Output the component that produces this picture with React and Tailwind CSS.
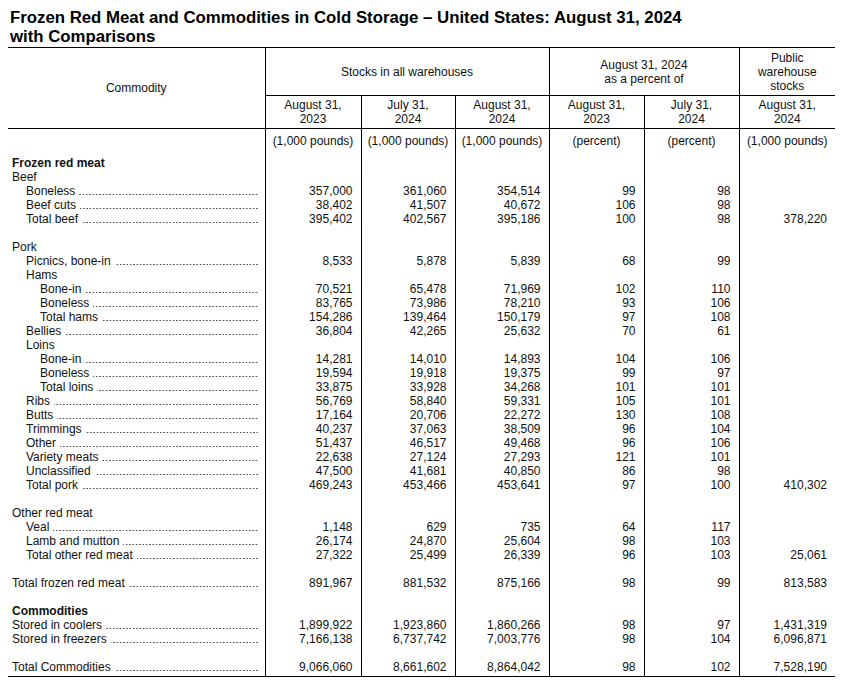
const rows = [
  { label: 'Frozen red meat', lvl: 0, bold: true },
  { label: 'Beef', lvl: 0 },
  { label: 'Boneless', lvl: 1, v: ['357,000', '361,060', '354,514', '99', '98', ''] },
  { label: 'Beef cuts', lvl: 1, v: ['38,402', '41,507', '40,672', '106', '98', ''] },
  { label: 'Total beef', lvl: 1, v: ['395,402', '402,567', '395,186', '100', '98', '378,220'] },
  {},
  { label: 'Pork', lvl: 0 },
  { label: 'Picnics, bone-in', lvl: 1, v: ['8,533', '5,878', '5,839', '68', '99', ''] },
  { label: 'Hams', lvl: 1 },
  { label: 'Bone-in', lvl: 2, v: ['70,521', '65,478', '71,969', '102', '110', ''] },
  { label: 'Boneless', lvl: 2, v: ['83,765', '73,986', '78,210', '93', '106', ''] },
  { label: 'Total hams', lvl: 2, v: ['154,286', '139,464', '150,179', '97', '108', ''] },
  { label: 'Bellies', lvl: 1, v: ['36,804', '42,265', '25,632', '70', '61', ''] },
  { label: 'Loins', lvl: 1 },
  { label: 'Bone-in', lvl: 2, v: ['14,281', '14,010', '14,893', '104', '106', ''] },
  { label: 'Boneless', lvl: 2, v: ['19,594', '19,918', '19,375', '99', '97', ''] },
  { label: 'Total loins', lvl: 2, v: ['33,875', '33,928', '34,268', '101', '101', ''] },
  { label: 'Ribs', lvl: 1, v: ['56,769', '58,840', '59,331', '105', '101', ''] },
  { label: 'Butts', lvl: 1, v: ['17,164', '20,706', '22,272', '130', '108', ''] },
  { label: 'Trimmings', lvl: 1, v: ['40,237', '37,063', '38,509', '96', '104', ''] },
  { label: 'Other', lvl: 1, v: ['51,437', '46,517', '49,468', '96', '106', ''] },
  { label: 'Variety meats', lvl: 1, v: ['22,638', '27,124', '27,293', '121', '101', ''] },
  { label: 'Unclassified', lvl: 1, v: ['47,500', '41,681', '40,850', '86', '98', ''] },
  { label: 'Total pork', lvl: 1, v: ['469,243', '453,466', '453,641', '97', '100', '410,302'] },
  {},
  { label: 'Other red meat', lvl: 0 },
  { label: 'Veal', lvl: 1, v: ['1,148', '629', '735', '64', '117', ''] },
  { label: 'Lamb and mutton', lvl: 1, v: ['26,174', '24,870', '25,604', '98', '103', ''] },
  { label: 'Total other red meat', lvl: 1, v: ['27,322', '25,499', '26,339', '96', '103', '25,061'] },
  {},
  { label: 'Total frozen red meat', lvl: 0, v: ['891,967', '881,532', '875,166', '98', '99', '813,583'] },
  {},
  { label: 'Commodities', lvl: 0, bold: true },
  { label: 'Stored in coolers', lvl: 0, v: ['1,899,922', '1,923,860', '1,860,266', '98', '97', '1,431,319'] },
  { label: 'Stored in freezers', lvl: 0, v: ['7,166,138', '6,737,742', '7,003,776', '98', '104', '6,096,871'] },
  {},
  { label: 'Total Commodities', lvl: 0, v: ['9,066,060', '8,661,602', '8,864,042', '98', '102', '7,528,190'] },
];

const indent = ['pl-[4px]', 'pl-[18px]', 'pl-[32px]'];

// rótulo com pontilhado até a borda da coluna
const Label = ({ r }) => (
  <div className={`flex h-[14px] pr-[6px] ${indent[r.lvl || 0]}`}>
    <span className={`whitespace-nowrap ${r.bold ? 'font-bold' : ''}`}>{r.label}</span>
    {r.v && (
      <span className="ml-[4px] flex-1 bg-[radial-gradient(circle,#555_0.65px,transparent_0.95px)] bg-[length:3.33px_3px] bg-repeat-x bg-[position:right_bottom_2px]" />
    )}
  </div>
);

const th = 'p-0 font-normal text-center align-middle border-black';

export default function App() {
  return (
    <div className="bg-white text-[#111] font-['Liberation_Sans',Arial,sans-serif] w-[849px] h-[686px]">
      <h1 className="pl-[10px] pt-[8px] text-[16.8px] leading-[19px] font-bold text-black">
        Frozen Red Meat and Commodities in Cold Storage – United States: August 31, 2024
        <br />
        with Comparisons
      </h1>
      <table className="ml-[8px] mt-[1px] w-[827px] table-fixed border-collapse border-t border-b border-black text-[12px] leading-[14px]">
        <colgroup>
          <col className="w-[257px]" />
          <col className="w-[96px]" />
          <col className="w-[94px]" />
          <col className="w-[94px]" />
          <col className="w-[95px]" />
          <col className="w-[95px]" />
          <col className="w-[96px]" />
        </colgroup>
        <thead>
          <tr className="h-[48px]">
            <th rowSpan={2} className={`${th} border-r border-b`}>Commodity</th>
            <th colSpan={3} className={`${th} border-r border-b`}>Stocks in all warehouses</th>
            <th colSpan={2} className={`${th} border-r border-b`}>
              August 31, 2024
              <br />
              as a percent of
            </th>
            <th className={`${th} border-b`}>
              Public
              <br />
              warehouse
              <br />
              stocks
            </th>
          </tr>
          <tr className="h-[33px]">
            {['August 31,|2023', 'July 31,|2024', 'August 31,|2024', 'August 31,|2023', 'July 31,|2024', 'August 31,|2024'].map((d, i) => (
              <th key={i} className={`${th} border-b ${i < 5 ? 'border-r' : ''}`}>
                {d.split('|')[0]}
                <br />
                {d.split('|')[1]}
              </th>
            ))}
          </tr>
          <tr className="h-[27px]">
            <td className="p-0 border-r border-black" />
            {['(1,000 pounds)', '(1,000 pounds)', '(1,000 pounds)', '(percent)', '(percent)', '(1,000 pounds)'].map((u, i) => (
              <td key={i} className={`p-0 pt-[5px] align-top text-center border-black ${i < 5 ? 'border-r' : ''}`}>
                {u}
              </td>
            ))}
          </tr>
        </thead>
        <tbody>
          {rows.map((r, i) => (
            <tr key={i} className="h-[14px]">
              <td className="p-0 border-r border-black">{r.label ? <Label r={r} /> : null}</td>
              {[0, 1, 2, 3, 4, 5].map((c) => (
                <td key={c} className={`p-0 pr-[8px] text-right border-black ${c < 5 ? 'border-r' : ''}`}>
                  {r.v ? r.v[c] : ''}
                </td>
              ))}
            </tr>
          ))}
          <tr className="h-[3px]">
            <td className="p-0 border-r border-black" />
            {[0, 1, 2, 3, 4, 5].map((c) => (
              <td key={c} className={`p-0 border-black ${c < 5 ? 'border-r' : ''}`} />
            ))}
          </tr>
        </tbody>
      </table>
    </div>
  );
}
